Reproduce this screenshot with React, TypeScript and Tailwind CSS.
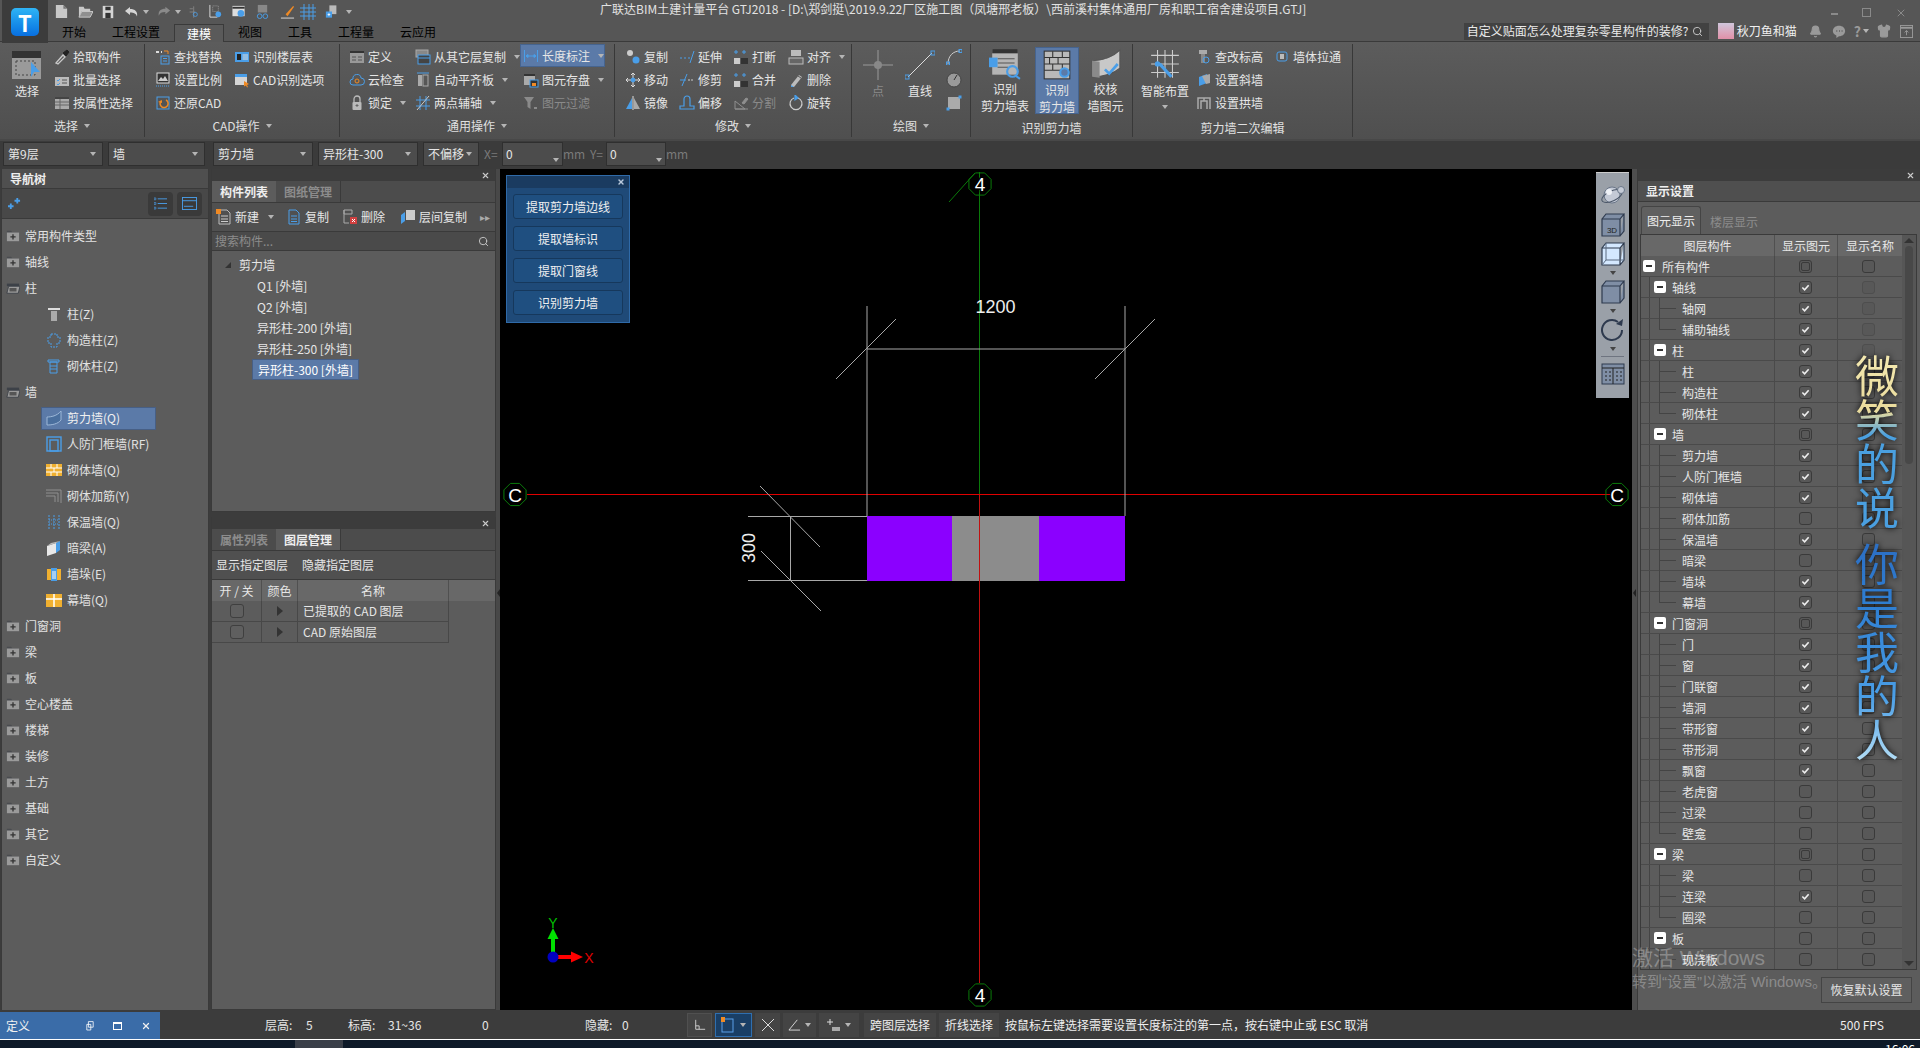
import type { ReactNode } from 'react';
import { Search, X, Bell, Shirt } from 'lucide-react';

const B = '#4a9ee8';
const G = '#c9c9c9';
const D = '#8f8f8f';
const O = '#f08a24';

const icons: Record<string, ReactNode> = {
  pick: <g fill="none" stroke={G}><path d="M2 14 9 6l2 2-7 7z" strokeWidth="1.3" /><path d="m9 4 4-3 2 2-3 4z" fill="#222" stroke="#222" /></g>,
  batch: <g><rect x="1" y="3" width="14" height="11" fill="#bbb" /><rect x="1" y="3" width="14" height="2" fill="#555" /><path d="m3 8 1 1 2-2m-3 5 1 1 2-2" stroke={B} fill="none" /><path d="M8 8h5M8 11h5" stroke="#555" /></g>,
  attr: <g><rect x="1" y="2" width="14" height="12" fill="#aaa" /><rect x="1" y="2" width="14" height="2" fill="#444" /><path d="M1 7h14M1 10h14M6 4v10" stroke="#666" /></g>,
  find: <g fill="none"><path d="M1 3h3M6 3h1" stroke="#ddd" strokeWidth="2" /><path d="M9 2h4v3" stroke={O} /><rect x="6" y="7" width="8" height="8" stroke={B} /><path d="M8 9.500h4M8 12h4" stroke={B} /></g>,
  scale: <g fill="none"><rect x="2" y="1" width="12" height="10" fill="#333" stroke="#ddd" /><path d="m3 9 3-4 2 2 2-3 3 5z" fill="#ccc" /><path d="M1 14h14" stroke={B} strokeDasharray="1 1" /></g>,
  restore: <g fill="none"><rect x="2" y="2" width="12" height="12" stroke={B} /><path d="M11 5a4 4 0 1 1-5 1" stroke={O} strokeWidth="1.500" /><path d="m3 7 4-2v3z" fill={O} /></g>,
  floor: <g><rect x="1" y="3" width="14" height="10" fill={B} /><rect x="3" y="5" width="4" height="6" fill="#222" /><path d="M8.500 6H14M8.500 8H14M8.500 10H14" stroke="#ddd" /></g>,
  cadopt: <g><rect x="1" y="2" width="12" height="11" fill="#d5d5d5" /><rect x="1" y="2" width="12" height="3" fill={B} /><path d="m10 9 5 3-2 1 1 2-1 .5-1-2-2 1z" fill={O} /></g>,
  def: <g><rect x="1" y="2" width="14" height="12" fill="#999" /><rect x="1" y="2" width="14" height="2" fill="#333" /><path d="M3 8h4M9 8h4M3 11h4M9 11h4" stroke="#555" /></g>,
  cloud: <g fill="none" stroke={B}><path d="M4 13a3 3 0 0 1 0-6 4 4 0 0 1 8-1 3.500 3.500 0 0 1 0 7z" /><circle cx="8" cy="9" r="2" stroke={O} /></g>,
  lock: <g><path d="M5 7V4a3 3 0 0 1 6 0v3" fill="none" stroke="#bbb" strokeWidth="1.300" /><rect x="3.500" y="7" width="9" height="8" rx="1" fill="#bbb" /><path d="M8 9v3M6.500 10.500h3" stroke="#666" /></g>,
  copylayer: <g fill="none"><rect x="1" y="1" width="12" height="7" fill="#888" stroke="#aaa" /><rect x="3" y="6" width="12" height="9" fill="#444" stroke={B} /><path d="M3 9h12" stroke={B} /></g>,
  flat: <g><path d="M2 1h12" stroke={B} /><rect x="3" y="3" width="4" height="11" fill="#aaa" /><rect x="8" y="3" width="5" height="11" fill="none" stroke="#aaa" /></g>,
  axis: <g fill="none" stroke={B}><path d="M1 5h14M1 11h14M5 1v14M11 1v14" /><path d="m2 15 12-14" stroke={G} /></g>,
  dim: <g fill="none" stroke={B}><path d="M1.500 2v12M14.500 2v12M3 8h10" /><path d="m3 8 2-1.500v3zm10 0-2-1.500v3z" fill={B} /></g>,
  save: <g><rect x="1" y="2" width="11" height="11" fill="#aaa" /><rect x="1" y="2" width="11" height="2" fill="#333" /><rect x="7" y="8" width="8" height="7" fill="#333" stroke={B} /><rect x="9" y="11" width="4" height="3" fill={O} /></g>,
  filter: <g><path d="M1 2h10L7.500 7v7l-3-2V7z" fill="#8a8a8a" /><path d="M11 13h3" stroke="#8a8a8a" strokeWidth="2" /></g>,
  copy: <g><circle cx="5" cy="4" r="3" fill="#ccc" /><circle cx="11" cy="11" r="3.500" fill={B} /></g>,
  move: <g fill="none" stroke="#ddd"><path d="M8 1v14M1 8h14M6 3l2-2 2 2M6 13l2 2 2-2M3 6 1 8l2 2M13 6l2 2-2 2" /><circle cx="8" cy="8" r="2" fill={B} stroke={B} /></g>,
  mirror: <g><path d="M7 3v11H1z" fill={B} /><path d="M9 3v11h6z" fill="#aaa" /><path d="M8 1v14" stroke="#ddd" /></g>,
  extend: <g fill="none"><path d="M1 9h2M5 9h2M9 9h2" stroke={B} /><path d="m11 14 4-12" stroke={B} /></g>,
  trim: <g fill="none"><path d="M9 8h2M12 8h2" stroke="#ccc" /><path d="M1 8h6M3 14 8 2" stroke={B} /></g>,
  offset: <g fill="none" stroke={B} strokeWidth="1.200"><path d="M1 14v-3h4V4a3 3 0 0 1 6 0v7h4v3z" /></g>,
  brk: <g><path d="M3 1v4M1 3h4M11 1v4M9 3h4" stroke={B} /><rect x="1" y="9" width="6" height="6" fill="#ccc" /><rect x="8" y="9" width="7" height="6" fill="#333" /></g>,
  split: <g fill="none" stroke={D}><path d="M2 14V6l10 8zM2 14h13" /><path d="m9 8 4-5 2 1-4 5z" fill={D} /></g>,
  alignobj: <g><rect x="3" y="1" width="10" height="6" fill="#bbb" /><rect x="1" y="9" width="14" height="6" fill="#666" stroke="#bbb" /></g>,
  del: <g><path d="m3 13 8-10 3 2-8 10H3z" fill="#bbb" /><path d="m3 13 3 2H3z" fill={B} /><path d="m10 4 3 2" stroke="#555" /></g>,
  rotate: <g fill="none" stroke="#ccc" strokeWidth="1.200"><path d="M6 3a6 6 0 1 0 4 0" /><path d="m7 0 3 3-3 2z" fill={B} stroke={B} /></g>,
  lift: <g><rect x="3" y="1" width="8" height="4" fill="#aaa" /><rect x="5" y="5" width="4" height="9" fill="#888" /><circle cx="10" cy="11" r="3" fill="none" stroke={B} /></g>,
  slope: <g><path d="m3 5 8-3v9l-8 3z" fill={B} /><path d="m6 4 8-2v9l-4 1" fill="#aaa" /></g>,
  arch: <g fill="none" stroke="#aaa" strokeWidth="1.500"><path d="M2 14V3h12v11M5 14V6h6v8" /><path d="M8 3v3" /></g>,
  pull: <g><rect x="3" y="3" width="10" height="9" rx="2" fill="none" stroke={B} /><rect x="6" y="5" width="4" height="5" fill="#bbb" /></g>,
  folderplus: <g><path d="M1 4V2h5l1 2h8v10H1z" fill="#3d4148" opacity=".6" /><rect x="1" y="4" width="14" height="10" fill="#9a9a9a" /><path d="M8 6v6M5 9h6" stroke="#333" strokeWidth="1.500" /></g>,
  folderopen: <g><path d="M1 3h14v3H1z" fill="#3d4148" /><path d="M3 6h13l-2 8H1z" fill="#9a9a9a" stroke="#3d4148" /><rect x="4" y="8" width="8" height="4" fill="#555" /></g>,
  col: <g><path d="M2 2h12v2H2z" fill="#ddd" /><path d="M5 5h6v10H5z" fill="#aaa" /></g>,
  gzz: <g fill="none" stroke={B}><path d="M5 2h6v3h3v6h-3v4H5v-4H2V5h3z" strokeDasharray="2 1" /></g>,
  qtz: <g fill="none" stroke={B}><path d="M2 2h11v2H2zM4 4h7v11H4zM4 8h7M4 11h7" /></g>,
  shear: <g fill={B}><path d="M1 7c4 0 10-1 14-6v9c-3 4-9 5-14 5z" fill="#4a6f9e" stroke="#9db8d8" /></g>,
  rf: <g fill="none" stroke={B} strokeWidth="1.400"><rect x="1" y="1" width="14" height="14" /><rect x="4" y="4" width="8" height="11" /></g>,
  brick: <g><rect x="0" y="2" width="16" height="12" fill="#f0b030" /><path d="M0 6h16M0 10h16M5 2v4M11 2v4M8 6v4M5 10v4M11 10v4" stroke="#fff" /></g>,
  rebar: <g fill="none" stroke={D}><path d="M0 2h15v13M0 5h12v9M0 8h9v6" /></g>,
  insul: <g fill="none" stroke={B}><path d="M3 1v14M8 1v14M13 1v14" strokeDasharray="2 1" /><path d="M3 6h10M3 10h10" strokeDasharray="1 1" /></g>,
  hidden: <g><path d="m1 6 9-3v10l-9 3z" fill="#e8e8e8" /><path d="m10 3 4-2v9l-4 3z" fill={B} /><path d="m1 6 9-3 4-2-9 2z" fill="#bbb" /></g>,
  pier: <g><rect x="1" y="3" width="14" height="11" fill="#f0b030" /><rect x="5" y="2" width="6" height="13" fill={B} /><path d="M7 5v8M9 5v8" stroke="#fff" /></g>,
  curtain: <g><rect x="0" y="2" width="16" height="13" fill="#f0b030" /><path d="M0 7h16M8 2v13" stroke="#fff" strokeWidth="1.500" /></g>,
  qnew: <g><path d="M2 1h8l4 4v10H2z" fill="#c8c8c8" /><path d="M10 1v4h4" fill="#777" /></g>,
  qopen: <g><path d="M1 3h5l1 2h6v3H4l-3 6z" fill="#c8c8c8" /><path d="M4 8h12l-3 6H1z" fill="#8f8f8f" stroke="#c8c8c8" /></g>,
  qsave: <g><rect x="2" y="1" width="12" height="14" fill="#d5d5d5" /><rect x="5" y="2" width="6" height="4" fill="#333" /><rect x="5" y="9" width="6" height="6" fill="#333" /></g>,
  qundo: <g><path d="M6 3 1 7l5 4V8.500c4 0 6 1 7 4 1-5-2-7.500-7-7.500z" fill="#d5d5d5" /></g>,
  qredo: <g><path d="m10 3 5 4-5 4V8.500c-4 0-6 1-7 4-1-5 2-7.500 7-7.500z" fill="#8a8a8a" /></g>,
  qgrid: <g fill="none"><path d="M2 4h4M2 8h7M7 1v14" stroke="#8a8a8a" /><circle cx="9" cy="11" r="2.500" stroke={B} /></g>,
  qcorner: <g><path d="M2 1v13h8" fill="none" stroke="#ddd" /><path d="M5 2h6v6H5z" fill="none" stroke="#999" strokeDasharray="1 1" /><circle cx="11" cy="11" r="3" fill={B} /></g>,
  qdoc: <g><rect x="1" y="2" width="13" height="11" fill="#ddd" /><path d="M1 4h13" stroke="#333" strokeWidth="2" /><circle cx="10" cy="10" r="3.500" fill={B} /></g>,
  qbook: <g fill="none"><rect x="3" y="1" width="10" height="8" fill="#888" /><circle cx="5" cy="13" r="2.500" stroke={B} /><circle cx="11" cy="13" r="2.500" stroke={B} /></g>,
  qbrush: <g><path d="m6 11 8-9 1 1-7 10z" fill={O} /><path d="M1 15h14" stroke="#ddd" /></g>,
  qfence: <g fill="none" stroke={B}><path d="M0 4h16M0 8h16M0 12h16M4 0v16M9 0v16M13 0v16" /></g>,
  qplus: <g><path d="M5 1h8v10H5z" fill="#bbb" /><rect x="1" y="8" width="7" height="7" fill={B} /><path d="M4.500 10v3M3 11.500h3" stroke="#fff" /></g>,
};

function Ic({ n, className = 'w-4 h-4' }: { n: string; className?: string }) {
  return (
    <svg viewBox="0 0 16 16" className={`${className} shrink-0`}>
      {icons[n]}
    </svg>
  );
}

function Caret({ className = '' }: { className?: string }) {
  return <span className={`inline-block w-0 h-0 border-x-[3px] border-x-transparent border-t-[4px] border-t-[#b5b5b5] ${className}`} />;
}

function Tool({ icon, label, arrow, off, active }: { icon: string; label: string; arrow?: boolean; off?: boolean; active?: boolean }) {
  return (
    <div className={`h-[23px] flex items-center gap-[2px] whitespace-nowrap ${off ? 'text-[#8a8a8a]' : 'text-[#e6e6e6]'} ${active ? 'bg-[#5b7aa8] border border-[#46648f] -ml-[3px] pl-[2px] -mt-[1px] mb-[1px] w-[85px]' : ''}`}>
      <Ic n={icon} />
      <span className="ml-[1px]">{label}</span>
      {arrow && <Caret className="ml-[6px]" />}
    </div>
  );
}

function ToolCol({ w, items }: { w: string; items: ReactNode }) {
  return <div className={`${w} shrink-0 flex flex-col -mt-[1px]`}>{items}</div>;
}

function Group({ w, title, arrow = true, children }: { w: string; title: string; arrow?: boolean; children: ReactNode }) {
  return (
    <div className={`${w} shrink-0 h-full flex flex-col border-r border-[#383838]`}>
      <div className="h-[73px] pt-[2px] flex">{children}</div>
      <div className={`flex-1 flex items-center justify-center gap-[6px] text-[#e0e0e0] ${arrow ? 'pb-[2px]' : 'pt-[2px]'}`}>
        <span>{title}</span>
        {arrow && <Caret />}
      </div>
    </div>
  );
}

function Big({ label, w, children, off, active, sub, caret }: { label: string; w: string; children: ReactNode; off?: boolean; active?: boolean; sub?: string; caret?: boolean }) {
  const boxH = active ? 'h-[36px]' : sub ? 'h-[37px]' : 'h-[34px]';
  return (
    <div className={`${w} shrink-0 flex flex-col items-center h-[67px] mt-[1px] ${active ? 'bg-[#5b7aa8] border border-[#46648f]' : ''} ${off ? 'text-[#8a8a8a]' : 'text-[#e6e6e6]'}`}>
      <div className={`${boxH} mt-[1px] flex items-center justify-center`}>{children}</div>
      <div className="leading-[17px]">{label}</div>
      {sub && <div className="leading-[17px] whitespace-nowrap">{sub}</div>}
      {caret && <Caret className="mt-[6px]" />}
    </div>
  );
}

function Drop({ w, text, className = '' }: { w: string; text: string; className?: string }) {
  return (
    <div className={`${w} h-[24px] bg-[#4c4c4c] border border-[#2f2f2f] flex items-center justify-between px-[4px] text-[#e6e6e6] shrink-0 ${className}`}>
      <span>{text}</span>
      <Caret className="mr-[2px]" />
    </div>
  );
}

function Ribbon() {
  return (
    <div className="h-[98px] flex bg-linear-to-b from-[#5c5c5c] to-[#4f4f4f] border-t border-[#3a3a3a] pt-[2px] pb-[2px]">
      <Group w="w-[145px]" title="选择">
        <Big w="w-[54px]" label="选择">
          <svg viewBox="0 0 30 30" className="w-[30px] h-[30px]">
            <rect x="0" y="1" width="29" height="28" fill="#9a9a9a" />
            <rect x="0" y="1" width="29" height="7" fill="#333" />
            <rect x="4" y="11" width="19" height="14" fill="none" stroke="#444" strokeDasharray="2 2" />
            <path d="m19 12 9 10h-6l-3 5z" fill={B} />
          </svg>
        </Big>
        <ToolCol w="w-[90px]" items={<><Tool icon="pick" label="拾取构件" /><Tool icon="batch" label="批量选择" /><Tool icon="attr" label="按属性选择" /></>} />
      </Group>
      <Group w="w-[195px]" title="CAD操作">
        <div className="w-[10px]" />
        <ToolCol w="w-[79px]" items={<><Tool icon="find" label="查找替换" /><Tool icon="scale" label="设置比例" /><Tool icon="restore" label="还原CAD" /></>} />
        <ToolCol w="w-[100px]" items={<><Tool icon="floor" label="识别楼层表" /><Tool icon="cadopt" label="CAD识别选项" /></>} />
      </Group>
      <Group w="w-[275px]" title="通用操作">
        <div className="w-[9px]" />
        <ToolCol w="w-[66px]" items={<><Tool icon="def" label="定义" /><Tool icon="cloud" label="云检查" /><Tool icon="lock" label="锁定" arrow /></>} />
        <ToolCol w="w-[108px]" items={<><Tool icon="copylayer" label="从其它层复制" arrow /><Tool icon="flat" label="自动平齐板" arrow /><Tool icon="axis" label="两点辅轴" arrow /></>} />
        <ToolCol w="w-[90px]" items={<><Tool icon="dim" label="长度标注" arrow active /><Tool icon="save" label="图元存盘" arrow /><Tool icon="filter" label="图元过滤" off /></>} />
      </Group>
      <Group w="w-[237px]" title="修改">
        <div className="w-[10px]" />
        <ToolCol w="w-[54px]" items={<><Tool icon="copy" label="复制" /><Tool icon="move" label="移动" /><Tool icon="mirror" label="镜像" /></>} />
        <ToolCol w="w-[54px]" items={<><Tool icon="extend" label="延伸" /><Tool icon="trim" label="修剪" /><Tool icon="offset" label="偏移" /></>} />
        <ToolCol w="w-[55px]" items={<><Tool icon="brk" label="打断" /><Tool icon="brk" label="合并" /><Tool icon="split" label="分割" off /></>} />
        <ToolCol w="w-[60px]" items={<><Tool icon="alignobj" label="对齐" arrow /><Tool icon="del" label="删除" /><Tool icon="rotate" label="旋转" /></>} />
      </Group>
      <Group w="w-[119px]" title="绘图">
        <div className="w-[7px]" />
        <Big w="w-[38px]" label="点" off>
          <svg viewBox="0 0 30 30" className="w-[30px] h-[30px]"><path d="M15 0v30M0 15h30" stroke="#9a9a9a" /><circle cx="15" cy="15" r="4" fill="#888" /></svg>
        </Big>
        <Big w="w-[46px]" label="直线">
          <svg viewBox="0 0 30 30" className="w-[30px] h-[30px]"><path d="M3 27 27 3" stroke="#ddd" /><rect x="0" y="25" width="4" height="4" fill="none" stroke={B} /><rect x="26" y="1" width="4" height="4" fill="none" stroke={B} /></svg>
        </Big>
        <div className="w-[22px] flex flex-col items-center gap-[7px] pt-[3px]">
          <svg viewBox="0 0 16 16" className="w-4 h-4"><path d="M2 15C2 7 7 2 14 2" fill="none" stroke="#ccc" /><rect x="0.500" y="13" width="3" height="3" fill="none" stroke={B} /><rect x="13" y="0.500" width="3" height="3" fill="none" stroke={B} /></svg>
          <svg viewBox="0 0 16 16" className="w-4 h-4"><circle cx="8" cy="8" r="7" fill="#9a9a9a" stroke="#444" /><path d="m8 8 3-5" stroke="#333" /></svg>
          <svg viewBox="0 0 16 16" className="w-4 h-4"><rect x="2" y="2" width="12" height="12" fill="#aaa" /><rect x="0.500" y="12.500" width="3" height="3" fill={B} /><rect x="12.500" y="0.500" width="3" height="3" fill={B} /></svg>
        </div>
      </Group>
      <Group w="w-[162px]" title="识别剪力墙" arrow={false}>
        <div className="w-[5px]" />
        <Big w="w-[60px]" label="识别" sub="剪力墙表">
          <svg viewBox="0 0 30 30" className="w-[32px] h-[32px]"><rect x="3" y="1" width="24" height="24" fill="#b5b5b5" /><rect x="3" y="1" width="24" height="4" fill="#333" /><path d="M8 10h16M8 14h16M8 18h10" stroke="#555" /><rect x="0" y="9" width="8" height="9" fill={B} /><circle cx="22" cy="22" r="5" fill="none" stroke={B} strokeWidth="2" /><path d="m25 26 4 3" stroke={B} strokeWidth="2" /></svg>
        </Big>
        <Big w="w-[44px]" label="识别" sub="剪力墙" active>
          <svg viewBox="0 0 30 30" className="w-[32px] h-[32px]"><rect x="3" y="2" width="24" height="26" fill="#b9b9b9" stroke="#333" /><path d="M3 8h24M3 14h24M3 20h24M11 2v6M20 2v6M8 8v6M16 8v6M11 14v6M20 14v6" stroke="#333" /><circle cx="22" cy="22" r="4" fill="#5b7aa8" stroke={B} strokeWidth="2" /></svg>
        </Big>
        <Big w="w-[53px]" label="校核" sub="墙图元">
          <svg viewBox="0 0 30 30" className="w-[32px] h-[32px]"><path d="M2 12c10 0 20-4 26-10v17c-6 5-16 8-26 8z" fill="#c8c8c8" stroke="#555" /><path d="M2 12v15l7 1V13z" fill="#8a8a8a" /><path d="m14 20 4 4 8-9" fill="none" stroke={B} strokeWidth="2.500" /></svg>
        </Big>
      </Group>
      <Group w="w-[220px]" title="剪力墙二次编辑" arrow={false}>
        <div className="w-[3px]" />
        <Big w="w-[58px]" label="智能布置" caret>
          <svg viewBox="0 0 30 30" className="w-[32px] h-[32px]"><path d="M2 6h26M2 14h26M2 22h26M8 1v26M15 1v26M22 1v26" stroke="#ccc" /><circle cx="8" cy="14" r="2.500" fill={B} /><path d="m10 14 11 12" stroke={B} strokeWidth="3" /></svg>
        </Big>
        <div className="w-[2px]" />
        <ToolCol w="w-[78px]" items={<><Tool icon="lift" label="查改标高" /><Tool icon="slope" label="设置斜墙" /><Tool icon="arch" label="设置拱墙" /></>} />
        <ToolCol w="w-[72px]" items={<Tool icon="pull" label="墙体拉通" />} />
      </Group>
    </div>
  );
}

const TitleText = '广联达BIM土建计量平台 GTJ2018 - [D:\\郑剑挺\\2019.9.22厂区施工图（凤塘邢老板）\\西前溪村集体通用厂房和职工宿舍建设项目.GTJ]';

function Header() {
  return (
    <div className="h-[41px] flex bg-[#565656]">
      <div className="w-[46px] h-[43px] ml-[2px] bg-[#3c3c3c] flex items-center justify-center relative z-10">
        <div className="w-[28px] h-[28px] rounded-[5px] bg-linear-to-b from-[#2fb4f5] to-[#0a6fe0] flex items-center justify-center text-white font-bold text-[22px] leading-none">T</div>
      </div>
      <div className="flex-1 flex flex-col min-w-0">
        <div className="h-[23px] flex items-center relative">
          <div className="flex items-center pl-[6px]">
            <Ic n="qnew" className="w-[15px] h-[15px] mr-[9px]" />
            <Ic n="qopen" className="w-[15px] h-[15px] mr-[8px]" />
            <Ic n="qsave" className="w-[14px] h-[14px] mr-[9px]" />
            <Ic n="qundo" className="w-[16px] h-[16px] mr-[3px]" />
            <Caret className="mr-[7px]" />
            <Ic n="qredo" className="w-[15px] h-[15px] mr-[4px]" />
            <Caret className="mr-[7px]" />
            <Ic n="qgrid" className="w-[13px] h-[14px] mr-[7px]" />
            <Ic n="qcorner" className="w-[15px] h-[15px] mr-[8px]" />
            <Ic n="qdoc" className="w-[16px] h-[15px] mr-[8px]" />
            <Ic n="qbook" className="w-[15px] h-[15px] mr-[10px]" />
            <Ic n="qbrush" className="w-[15px] h-[15px] mr-[5px]" />
            <Ic n="qfence" className="w-[16px] h-[16px] mr-[9px]" />
            <Ic n="qplus" className="w-[14px] h-[15px] mr-[7px]" />
            <Caret />
          </div>
          <div className="absolute left-[552px] top-[3px] text-[#e2e2e2] whitespace-nowrap">{TitleText}</div>
          <div className="ml-auto flex items-center gap-[24px] pr-[13px] text-[#8a8a8a] mt-[2px]">
            <span className="w-[7px] h-[2px] bg-[#8a8a8a] mt-[3px]" />
            <span className="w-[9px] h-[9px] border border-[#8a8a8a]" />
            <X className="w-[12px] h-[12px]" />
          </div>
        </div>
        <div className="h-[18px] flex items-end relative">
          <div className="flex items-center gap-[26px] pl-[14px] h-full">
            <span>开始</span>
            <span>工程设置</span>
            <span className="-mx-[12px] px-[12px] h-[18px] bg-[#5a5a5a] border-x border-t border-[#3a3a3a] flex items-center relative top-[1px] text-white">建模</span>
            <span>视图</span>
            <span>工具</span>
            <span>工程量</span>
            <span>云应用</span>
          </div>
          <div className="ml-auto flex items-center h-[18px] mb-[1px] pr-[7px] text-[#9a9a9a]">
            <div className="w-[245px] h-[17px] bg-[#424242] flex items-center justify-between px-[3px] text-[#eaeaea] mr-[9px]">
              <span>自定义贴面怎么处理复杂零星构件的装修?</span>
              <Search className="w-[11px] h-[11px] text-[#ccc] mr-[3px]" />
            </div>
            <div className="w-[16px] h-[16px] bg-linear-to-b from-[#cfc6dc] to-[#e090a8] mr-[3px]" />
            <span className="text-[#f0f0f0] w-[72px]">秋刀鱼和猫</span>
            <Bell className="w-[13px] h-[13px] fill-[#9a9a9a] mr-[10px]" />
            <svg viewBox="0 0 16 16" className="w-[14px] h-[14px] mr-[8px]"><path d="M8 2c4 0 7 2.500 7 6s-3 6-7 6l-3 2v-3C2 12 1 10 1 8c0-3.500 3-6 7-6z" fill="#9a9a9a" /><path d="M5 8h1M8 8h1M11 8h1" stroke="#565656" strokeWidth="1.500" /></svg>
            <span className="font-bold text-[14px] leading-none">?</span>
            <Caret className="mr-[8px] ml-[2px]" />
            <Shirt className="w-[14px] h-[14px] fill-[#9a9a9a] mr-[9px]" />
            <svg viewBox="0 0 14 14" className="w-[13px] h-[13px]"><rect x="0.500" y="0.500" width="13" height="13" fill="none" stroke="#9a9a9a" /><path d="M1 3h12" stroke="#9a9a9a" strokeWidth="2" /><path d="M7 11V6M5 8l2-2 2 2" fill="none" stroke="#9a9a9a" /></svg>
          </div>
        </div>
      </div>
    </div>
  );
}

function OptionBar() {
  return (
    <div className="h-[30px] bg-[#3b3b3b] border-t-2 border-[#484848] flex items-center pl-[3px] gap-[5px] shrink-0 pb-[2px]">
      <Drop w="w-[100px]" text="第9层" />
      <Drop w="w-[97px]" text="墙" />
      <Drop w="w-[100px]" text="剪力墙" className="ml-[3px]" />
      <Drop w="w-[100px]" text="异形柱-300" />
      <Drop w="w-[56px]" text="不偏移" />
      <span className="text-[#7a7a7a] w-[18px]">X=</span>
      <div className="w-[61px] h-[24px] bg-[#4c4c4c] border border-[#2f2f2f] flex items-center justify-between px-[3px] -ml-[5px] text-[#e6e6e6]">
        <span>0</span>
        <Caret className="mt-[12px]" />
      </div>
      <span className="text-[#7a7a7a] -ml-[5px] w-[22px]">mm</span>
      <span className="text-[#7a7a7a] w-[16px]">Y=</span>
      <div className="w-[60px] h-[24px] bg-[#4c4c4c] border border-[#2f2f2f] flex items-center justify-between px-[3px] -ml-[5px] text-[#e6e6e6]">
        <span>0</span>
        <Caret className="mt-[12px]" />
      </div>
      <span className="text-[#7a7a7a] -ml-[5px]">mm</span>
    </div>
  );
}

const navItems: { t: string; n: string; child?: boolean; sel?: boolean }[] = [
  { t: '常用构件类型', n: 'folderplus' },
  { t: '轴线', n: 'folderplus' },
  { t: '柱', n: 'folderopen' },
  { t: '柱(Z)', n: 'col', child: true },
  { t: '构造柱(Z)', n: 'gzz', child: true },
  { t: '砌体柱(Z)', n: 'qtz', child: true },
  { t: '墙', n: 'folderopen' },
  { t: '剪力墙(Q)', n: 'shear', child: true, sel: true },
  { t: '人防门框墙(RF)', n: 'rf', child: true },
  { t: '砌体墙(Q)', n: 'brick', child: true },
  { t: '砌体加筋(Y)', n: 'rebar', child: true },
  { t: '保温墙(Q)', n: 'insul', child: true },
  { t: '暗梁(A)', n: 'hidden', child: true },
  { t: '墙垛(E)', n: 'pier', child: true },
  { t: '幕墙(Q)', n: 'curtain', child: true },
  { t: '门窗洞', n: 'folderplus' },
  { t: '梁', n: 'folderplus' },
  { t: '板', n: 'folderplus' },
  { t: '空心楼盖', n: 'folderplus' },
  { t: '楼梯', n: 'folderplus' },
  { t: '装修', n: 'folderplus' },
  { t: '土方', n: 'folderplus' },
  { t: '基础', n: 'folderplus' },
  { t: '其它', n: 'folderplus' },
  { t: '自定义', n: 'folderplus' },
];

function NavPanel() {
  return (
    <div className="w-[208px] ml-[1px] shrink-0 bg-[#5c5c5c] flex flex-col border-x border-[#3a3a3a]">
      <div className="h-[20px] bg-[#4f4f4f] font-bold flex items-center pl-[8px] text-[#eee] border-b border-[#3a3a3a]">导航树</div>
      <div className="h-[30px] bg-[#484848] border-b border-[#3a3a3a] flex items-center px-[6px]">
        <svg viewBox="0 0 14 14" className="w-[13px] h-[13px]"><path d="M3 7v6M0 10h6M10 1v6M7 4h6" stroke={B} strokeWidth="2" /></svg>
        <div className="ml-auto w-[25px] h-[24px] rounded-[4px] bg-[#3a3a3a] flex items-center justify-center">
          <svg viewBox="0 0 14 14" className="w-[13px] h-[13px]"><path d="M4 2h10M4 7h10M4 12h10" stroke={B} /><path d="M0 1h2v2H0zM0 6h2v2H0zM0 11h2v2H0z" fill="none" stroke={B} strokeWidth=".7" /></svg>
        </div>
        <div className="ml-[4px] w-[25px] h-[24px] rounded-[4px] bg-[#3a3a3a] flex items-center justify-center">
          <svg viewBox="0 0 16 14" className="w-[15px] h-[13px]"><rect x="0.500" y="0.500" width="15" height="13" fill="none" stroke={B} /><path d="M0 4h16M2 10h10" stroke={B} /></svg>
        </div>
      </div>
      <div className="pt-[4px] flex flex-col">
        {navItems.map((it) => (
          <div key={it.t} className={`h-[26px] flex items-center text-[#e2e2e2] ${it.child ? 'pl-[39px]' : 'pl-[4px]'}`}>
            {it.sel ? (
              <div className="h-[23px] w-[115px] bg-[#5b7aa8] border border-[#475f85] flex items-center gap-[5px] pl-[4px] text-[#f0f0f0]">
                <Ic n={it.n} />
                {it.t}
              </div>
            ) : (
              <div className={`flex items-center gap-[5px] ${it.child ? 'pl-[5px]' : ''}`}>
                <Ic n={it.n} className={it.child ? 'w-4 h-4' : 'w-[14px] h-[14px]'} />
                {it.t}
              </div>
            )}
          </div>
        ))}
      </div>
    </div>
  );
}

function PanelStrip() {
  return (
    <div className="h-[12px] bg-[#3c3c3c] flex items-center justify-end pr-[5px] text-[#ccc] shrink-0">
      <X className="w-[9px] h-[9px]" strokeWidth={3} />
    </div>
  );
}

function TabPair({ a, b, first }: { a: string; b: string; first: boolean }) {
  return (
    <div className="h-[22px] bg-[#4c4c4c] flex border-b border-[#3a3a3a] shrink-0 font-bold">
      <div className={`w-[64px] flex items-center justify-center ${first ? 'bg-[#5c5c5c] text-[#eee]' : 'text-[#8c8c8c]'}`}>{a}</div>
      <div className={`w-[65px] flex items-center justify-center border-r border-[#3a3a3a] ${first ? 'text-[#8c8c8c]' : 'bg-[#5c5c5c] text-[#eee]'}`}>{b}</div>
    </div>
  );
}

const listItems = ['Q1 [外墙]', 'Q2 [外墙]', '异形柱-200 [外墙]', '异形柱-250 [外墙]', '异形柱-300 [外墙]'];

function ListPanel() {
  return (
    <div className="flex-1 flex flex-col">
      <div className="h-[343px] flex flex-col border border-[#3a3a3a] border-t-0 bg-[#5c5c5c] shrink-0">
        <PanelStrip />
        <TabPair a="构件列表" b="图纸管理" first />
        <div className="h-[29px] bg-[#505050] border-b border-[#3a3a3a] flex items-center pl-[4px] text-[#e6e6e6] shrink-0">
          <svg viewBox="0 0 16 16" className="w-4 h-4"><path d="M3 1h8l3 3v11H3z" fill="none" stroke="#bbb" /><path d="M5 7h7M5 10h7M5 12.500h7" stroke="#ccc" /><rect x="0" y="0" width="5" height="5" fill={O} /></svg>
          <span className="ml-[3px]">新建</span>
          <Caret className="ml-[9px]" />
          <svg viewBox="0 0 16 16" className="w-4 h-4 ml-[12px]"><path d="M3 1h7l3 3v11H3z" fill="none" stroke={B} /><path d="M5 7h6M5 10h6M5 12.500h6" stroke={B} /></svg>
          <span className="ml-[3px]">复制</span>
          <svg viewBox="0 0 16 16" className="w-4 h-4 ml-[13px]"><path d="M2 1h8v4H2zM2 1v13h5" fill="none" stroke="#aaa" /><rect x="8" y="8" width="7" height="7" fill="#d04040" /><path d="m10 10 3 3m0-3-3 3" stroke="#fff" /></svg>
          <span className="ml-[3px]">删除</span>
          <svg viewBox="0 0 16 16" className="w-4 h-4 ml-[15px]"><path d="M1 15V6l4-3v9z" fill={B} /><rect x="6" y="1" width="9" height="10" fill="#ccc" /></svg>
          <span className="ml-[3px]">层间复制</span>
          <span className="ml-auto mr-[5px] text-[#aaa] text-[10px]">▸▸</span>
        </div>
        <div className="h-[19px] bg-[#4a4a4a] border-b border-[#3a3a3a] flex items-center justify-between pl-[3px] pr-[6px] text-[#8c8c8c] shrink-0">
          <span>搜索构件...</span>
          <Search className="w-[11px] h-[11px] text-[#ccc]" />
        </div>
        <div className="flex-1 pt-[3px] text-[#e6e6e6]">
          <div className="h-[21px] flex items-center pl-[13px] gap-[8px]">
            <span className="w-0 h-0 border-l-[6px] border-l-transparent border-b-[6px] border-b-[#333]" />
            剪力墙
          </div>
          {listItems.map((t, i) => (
            <div key={t} className="h-[21px] flex items-center pl-[40px]">
              <span className={`h-[21px] flex items-center px-[5px] ${i === 4 ? 'bg-[#5b7aa8] border border-[#475f85] text-white' : ''}`}>{t}</span>
            </div>
          ))}
        </div>
      </div>
      <div className="h-[5px]" />
      <div className="flex-1 flex flex-col border border-[#3a3a3a] bg-[#5c5c5c] border-t-0">
        <PanelStrip />
        <TabPair a="属性列表" b="图层管理" first={false} />
        <div className="h-[29px] bg-[#505050] border-b border-[#3a3a3a] flex items-center gap-[14px] pl-[4px] text-[#e6e6e6] shrink-0">
          <span>显示指定图层</span>
          <span>隐藏指定图层</span>
        </div>
        <div className="grid grid-cols-[50px_36px_151px_1fr] h-[21px] bg-[#686868] text-[#e6e6e6] shrink-0">
          <div className="flex items-center justify-center border-r border-[#505050]">开 / 关</div>
          <div className="flex items-center justify-center border-r border-[#505050]">颜色</div>
          <div className="flex items-center justify-center border-r border-[#505050]">名称</div>
          <div />
        </div>
        {['已提取的 CAD 图层', 'CAD 原始图层'].map((t) => (
          <div key={t} className="grid grid-cols-[50px_36px_151px] w-[237px] h-[21px] border-b border-[#484848] text-[#e6e6e6] shrink-0">
            <div className="flex items-center justify-center border-r border-[#484848]">
              <span className="w-[14px] h-[14px] rounded-[3px] border border-[#3f3f3f] bg-[#5f5f5f]" />
            </div>
            <div className="flex items-center justify-center border-r border-[#484848]">
              <span className="w-0 h-0 border-y-[5px] border-y-transparent border-l-[6px] border-l-[#333]" />
            </div>
            <div className="flex items-center pl-[5px] border-r border-[#484848]">{t}</div>
          </div>
        ))}
      </div>
    </div>
  );
}

function Bubble({ x, y, t }: { x: number; y: number; t: string }) {
  const pts = Array.from({ length: 8 }, (_, i) => {
    const a = Math.PI / 8 + (i * Math.PI) / 4;
    return `${x + 12 * Math.cos(a)},${y + 12 * Math.sin(a)}`;
  }).join(' ');
  return (
    <g>
      <polygon points={pts} fill="none" stroke="#0a7a0a" />
      <text x={x} y={y + 7} textAnchor="middle" fill="#fff" fontSize="19" fontFamily="Liberation Sans" stroke="#000" strokeWidth="3" paintOrder="stroke">{t}</text>
    </g>
  );
}

function Drawing() {
  const g = '#a8a8a8';
  return (
    <svg viewBox="500 169 1132 841" className="absolute inset-0 w-[1132px] h-[841px]">
      <path d="M979.500 172V494" stroke="#0a7a0a" />
      <path d="M979.500 494V983" stroke="#c01010" />
      <path d="M527 494.500H1612" stroke="#e00000" />
      <path d="m949 202 26-29" stroke="#0a7a0a" />
      <path d="M867 306V516M1125 306V516M867 349H1125M748 516.500H867M748 580.500H867M790.500 516V580" stroke={g} />
      <path d="m836 379 60-60M1095 379l60-60" stroke={g} />
      <path d="m760 486 60 61M761 551l60 60" stroke={g} />
      <rect x="867" y="516" width="85" height="65" fill="#8b00ff" />
      <rect x="952" y="516" width="87" height="65" fill="#8c8c8c" />
      <rect x="1039" y="516" width="86" height="65" fill="#8b00ff" />
      <path d="M979.500 516V581" stroke="#c01010" />
      <text x="995.500" y="313" textAnchor="middle" fill="#eee" fontSize="18" fontFamily="Liberation Sans">1200</text>
      <text x="0" y="0" transform="translate(755 548) rotate(-90)" textAnchor="middle" fill="#eee" fontSize="18" fontFamily="Liberation Sans">300</text>
      <Bubble x={980} y={184} t="4" />
      <Bubble x={980} y={995} t="4" />
      <Bubble x={515} y={494.500} t="C" />
      <Bubble x={1617} y={494.500} t="C" />
      <path d="M553 957v-20" stroke="#00e000" strokeWidth="4" />
      <path d="m553 928 5.500 11h-11z" fill="#00e000" />
      <path d="M553 957h18" stroke="#ff0000" strokeWidth="4" />
      <path d="m583 957-12-5.500v11z" fill="#ff0000" />
      <circle cx="553" cy="957" r="5.500" fill="#0000c0" />
      <text x="553" y="928" textAnchor="middle" fill="#00c000" fontSize="14" fontFamily="Liberation Sans">Y</text>
      <text x="589" y="963" textAnchor="middle" fill="#e00000" fontSize="14" fontFamily="Liberation Sans">X</text>
    </svg>
  );
}

function ViewTool() {
  return (
    <div className="absolute left-[1096px] top-[3px] w-[33px] h-[226px] bg-[#9aa0a8] border-t border-[#ccc] flex flex-col items-center pt-[11px]">
      <svg viewBox="0 0 24 22" className="w-[24px] h-[22px] shrink-0"><circle cx="11" cy="11" r="8" fill="#c4cad6" stroke="#6a7688" /><ellipse cx="11" cy="12" rx="11" ry="5" fill="none" stroke="#4a5668" transform="rotate(-25 11 12)" /><circle cx="8" cy="8" r="3" fill="#eef1f6" /><circle cx="20" cy="6" r="3.500" fill="#c5cbd6" stroke="#6a7688" /></svg>
      <svg viewBox="0 0 24 24" className="w-[24px] h-[24px] mt-[7px] shrink-0"><path d="M1 6h18v17H1zM1 6l4-5h18l-4 5M19 23l4-5V1" fill="#7f8ea5" stroke="#2e3a4e" strokeWidth="1.200" /><text x="11" y="20" fontSize="8" fill="#222" fontFamily="Liberation Sans" textAnchor="middle">3D</text></svg>
      <svg viewBox="0 0 24 24" className="w-[24px] h-[24px] mt-[5px] shrink-0"><path d="M1 6h18v17H1zM1 6l4-5h18l-4 5M19 23l4-5V1" fill="#d4e8ff" stroke="#2e3a4e" strokeWidth="1.200" /><path d="M5 1v17h18M5 18l-4 5" fill="none" stroke="#5a6a80" /></svg>
      <Caret className="mt-[5px] !border-t-[#444]" />
      <svg viewBox="0 0 24 24" className="w-[24px] h-[24px] mt-[5px] shrink-0"><path d="M1 6h18v17H1zM1 6l4-5h18l-4 5M19 23l4-5V1" fill="#7f8ea5" stroke="#2e3a4e" strokeWidth="1.200" /></svg>
      <Caret className="mt-[5px] !border-t-[#444]" />
      <svg viewBox="0 0 24 24" className="w-[24px] h-[24px] mt-[5px] shrink-0"><path d="M21 12a10 10 0 1 1-4-8" fill="none" stroke="#2e3a4e" strokeWidth="2" /><path d="m22 1-1 7-6-2z" fill="#2e3a4e" /></svg>
      <Caret className="mt-[5px] !border-t-[#444]" />
      <div className="w-[23px] h-px bg-[#6e7480] mt-[5px] shrink-0" />
      <svg viewBox="0 0 24 24" className="w-[24px] h-[24px] mt-[4px] shrink-0"><rect x="1" y="3" width="22" height="20" fill="#7f8ea5" stroke="#2e3a4e" /><path d="M1 7h22M12 7v16M4 11h2M8 11h2M4 15h2M8 15h2M4 19h2M8 19h2M15 11h2M19 11h2M15 15h2M19 15h2M15 19h2M19 19h2" stroke="#222" /></svg>
    </div>
  );
}

function Canvas() {
  return (
    <div className="relative w-[1132px] shrink-0 bg-black overflow-hidden">
      <Drawing />
      <div className="absolute left-[6px] top-[6px] w-[124px] h-[148px] bg-[#1f4a78] border border-[#2f6aa8] flex flex-col">
        <div className="h-[12px] bg-[#1a3b60] flex items-center justify-end pr-[4px] text-[#b9c9dc] shrink-0">
          <X className="w-[8px] h-[8px]" strokeWidth={4} />
        </div>
        <div className="flex flex-col gap-[7px] px-[6px] pt-[6px]">
          {['提取剪力墙边线', '提取墙标识', '提取门窗线', '识别剪力墙'].map((t) => (
            <div key={t} className="h-[25px] bg-[#1f4f80] border border-[#16385c] rounded-[3px] flex items-center justify-center text-[#f0f0f0]">{t}</div>
          ))}
        </div>
      </div>
      <ViewTool />
    </div>
  );
}

type Row = { t: string; l: 0 | 1 | 2; s: 0 | 1 | 2; last?: boolean };

const rows: Row[] = [
  { t: '所有构件', l: 0, s: 2 },
  { t: '轴线', l: 1, s: 1 },
  { t: '轴网', l: 2, s: 1 },
  { t: '辅助轴线', l: 2, s: 1, last: true },
  { t: '柱', l: 1, s: 1 },
  { t: '柱', l: 2, s: 1 },
  { t: '构造柱', l: 2, s: 1 },
  { t: '砌体柱', l: 2, s: 1, last: true },
  { t: '墙', l: 1, s: 2 },
  { t: '剪力墙', l: 2, s: 1 },
  { t: '人防门框墙', l: 2, s: 1 },
  { t: '砌体墙', l: 2, s: 1 },
  { t: '砌体加筋', l: 2, s: 0 },
  { t: '保温墙', l: 2, s: 1 },
  { t: '暗梁', l: 2, s: 0 },
  { t: '墙垛', l: 2, s: 1 },
  { t: '幕墙', l: 2, s: 1, last: true },
  { t: '门窗洞', l: 1, s: 2 },
  { t: '门', l: 2, s: 1 },
  { t: '窗', l: 2, s: 1 },
  { t: '门联窗', l: 2, s: 1 },
  { t: '墙洞', l: 2, s: 1 },
  { t: '带形窗', l: 2, s: 1 },
  { t: '带形洞', l: 2, s: 1 },
  { t: '飘窗', l: 2, s: 1 },
  { t: '老虎窗', l: 2, s: 0 },
  { t: '过梁', l: 2, s: 0 },
  { t: '壁龛', l: 2, s: 0, last: true },
  { t: '梁', l: 1, s: 2 },
  { t: '梁', l: 2, s: 0 },
  { t: '连梁', l: 2, s: 1 },
  { t: '圈梁', l: 2, s: 0, last: true },
  { t: '板', l: 1, s: 0 },
  { t: '现浇板', l: 2, s: 0 },
];

function Check({ s, dim }: { s: 0 | 1 | 2; dim?: boolean }) {
  return (
    <span className={`w-[13px] h-[13px] rounded-[3px] border flex items-center justify-center bg-[#585858] ${dim ? 'border-[#4e4e4e]' : 'border-[#3a3a3a]'}`}>
      {s === 1 && (
        <svg viewBox="0 0 10 10" className="w-[9px] h-[9px]"><path d="m1.500 5 2.500 2.500 4.500-5" fill="none" stroke="#eee" strokeWidth="1.800" /></svg>
      )}
      {s === 2 && <span className="w-[9px] h-[9px] rounded-[2px] border border-[#3a3a3a]" />}
    </span>
  );
}

function Expander({ left }: { left: string }) {
  return (
    <span className={`absolute ${left} top-[4px] w-[12px] h-[12px] bg-white rounded-[2px] flex items-center justify-center`}>
      <span className="w-[6px] h-[2px] bg-[#333]" />
    </span>
  );
}

function DisplayRow({ r, i }: { r: Row; i: number }) {
  return (
    <div className="grid grid-cols-[134px_63px_64px] h-[21px] border-b border-[#4a4a4a] text-[#e6e6e6]">
      <div className="relative flex items-center border-r border-[#4a4a4a]">
        {i > 0 && <span className="absolute left-[8px] top-0 bottom-0 w-px bg-[#444]" />}
        {r.l === 2 && (
          <>
            <span className={`absolute left-[18px] top-0 w-px bg-[#444] ${r.last ? 'h-[11px]' : 'h-[21px]'}`} />
            <span className="absolute left-[18px] top-[10px] w-[17px] h-px bg-[#444]" />
          </>
        )}
        {r.l === 0 && <Expander left="left-[2px]" />}
        {r.l === 1 && <Expander left="left-[13px]" />}
        <span className={`pt-[2px] ${r.l === 0 ? 'pl-[21px]' : r.l === 1 ? 'pl-[31px]' : 'pl-[41px]'}`}>{r.t}</span>
      </div>
      <div className="flex items-center justify-center pr-[2px] border-r border-[#4a4a4a]">
        <Check s={r.s} />
      </div>
      <div className="flex items-center justify-center pr-[3px]">
        <Check s={0} dim={i >= 1 && i <= 4} />
      </div>
    </div>
  );
}

function DisplayPanel() {
  return (
    <div className="w-[283px] shrink-0 bg-[#5c5c5c] border-l border-[#3a3a3a] flex flex-col relative">
      <PanelStrip />
      <div className="h-[21px] bg-[#4f4f4f] border-b border-[#3a3a3a] flex items-center pl-[8px] font-bold text-[#eee] shrink-0">显示设置</div>
      <div className="h-[32px] flex items-end pl-[3px] shrink-0">
        <div className="w-[60px] h-[28px] rounded-t-[3px] bg-[#606060] border-x border-t border-[#444] flex items-center justify-center text-[#eee]">图元显示</div>
        <div className="w-[66px] h-[24px] flex items-center justify-center text-[#8c8c8c]">楼层显示</div>
      </div>
      <div className="ml-[2px] w-[277px] h-[736px] border border-[#3a3a3a] flex shrink-0 overflow-hidden">
        <div className="w-[261px] shrink-0">
          <div className="grid grid-cols-[134px_63px_64px] h-[21px] bg-[#686868] text-[#e6e6e6]">
            <div className="flex items-center justify-center border-r border-[#505050]">图层构件</div>
            <div className="flex items-center justify-center border-r border-[#505050]">显示图元</div>
            <div className="flex items-center justify-center">显示名称</div>
          </div>
          {rows.map((r, i) => (
            <DisplayRow key={i} r={r} i={i} />
          ))}
        </div>
        <div className="flex-1 bg-[#565656] flex flex-col items-center pt-[3px]">
          <span className="w-0 h-0 border-x-[5px] border-x-transparent border-b-[5px] border-b-[#333]" />
          <span className="w-[8px] h-[218px] rounded-full bg-[#484848] mt-[3px]" />
          <span className="mt-auto mb-[3px] w-0 h-0 border-x-[5px] border-x-transparent border-t-[5px] border-t-[#333]" />
        </div>
      </div>
      <div className="flex justify-end pt-[7px] pr-[8px]">
        <div className="w-[91px] h-[26px] bg-[#5f5f5f] border border-[#444] flex items-center justify-center text-[#e6e6e6]">恢复默认设置</div>
      </div>
      <div className="absolute left-[217px] top-[185px] w-[44px] text-[44px] leading-[44px] [writing-mode:vertical-rl] [text-orientation:upright] [word-spacing:-32px] whitespace-nowrap bg-[linear-gradient(180deg,#f3e8b0_0%,#eadb9c_14%,#4aa0e0_20%,#4a9fe0_42%,#2c6fc4_47%,#2f7fd2_62%,#4a9ee6_84%,#b4def6_100%)] bg-clip-text text-transparent drop-shadow-[0_0_3px_#000]">
        微笑的说 你是我的人
      </div>
      <div className="absolute left-[-6px] top-[776px] pointer-events-none text-[#ffffff4d] whitespace-nowrap font-['Liberation_Sans','Noto_Sans_CJK_SC',sans-serif]">
        <div className="text-[21px] leading-[26px]">激活 Windows</div>
        <div className="text-[15px] leading-[22px]">转到“设置”以激活 Windows。</div>
      </div>
    </div>
  );
}

function StatusBar() {
  return (
    <div className="h-[29px] bg-[#3c3c3c] flex items-center shrink-0">
      <div className="w-[160px] h-[27px] mt-[2px] bg-[#3a6ca8] flex items-center pl-[6px] text-[#f0f0f0] shrink-0">
        <span>定义</span>
        <svg viewBox="0 0 10 12" className="w-[8px] h-[10px] ml-[56px]"><path d="M3 0.500h6v7H3zM1 4h5v7H1z" fill="none" stroke="#fff" /></svg>
        <span className="w-[9px] h-[8px] border border-white border-t-2 ml-[19px]" />
        <X className="w-[10px] h-[10px] ml-[19px]" strokeWidth={3} />
      </div>
      <div className="w-[527px] flex items-center text-[#e6e6e6] shrink-0">
        <span className="ml-[105px] w-[41px]">层高:</span>
        <span className="w-[42px]">5</span>
        <span className="w-[40px]">标高:</span>
        <span className="w-[94px]">31~36</span>
        <span className="w-[103px]">0</span>
        <span className="w-[37px]">隐藏:</span>
        <span>0</span>
      </div>
      <div className="flex items-center gap-[3px] shrink-0">
        <div className="w-[25px] h-[24px] bg-[#444] border border-[#505050] flex items-center justify-center">
          <svg viewBox="0 0 14 14" className="w-[12px] h-[12px]"><path d="M2 1v11h11M2 8h4v4" fill="none" stroke="#ddd" /></svg>
        </div>
        <div className="w-[37px] h-[24px] bg-[#1a3f66] border border-[#2f6fb0] flex items-center justify-center gap-[5px]">
          <svg viewBox="0 0 14 16" className="w-[14px] h-[16px]"><rect x="1" y="2" width="11" height="13" fill="none" stroke="#5aa0e8" /><rect x="0" y="0" width="4" height="5" fill={O} /></svg>
          <Caret />
        </div>
        <div className="w-[25px] h-[24px] bg-[#444] flex items-center justify-center">
          <svg viewBox="0 0 14 14" className="w-[14px] h-[14px]"><path d="m1 1 12 12M13 1 1 13" stroke="#ddd" /></svg>
        </div>
        <div className="w-[33px] h-[24px] bg-[#444] flex items-center justify-center gap-[4px]">
          <svg viewBox="0 0 14 14" className="w-[13px] h-[13px]"><path d="M1 13h12M1 13l9-11" stroke="#ddd" fill="none" /></svg>
          <Caret />
        </div>
        <div className="w-[40px] h-[24px] bg-[#444] flex items-center justify-center gap-[4px]">
          <svg viewBox="0 0 14 14" className="w-[14px] h-[14px]"><path d="M3 1v6M0 4h6" stroke="#ddd" /><rect x="5" y="9" width="8" height="4" fill="#aaa" /></svg>
          <Caret />
        </div>
        <div className="w-[72px] h-[24px] bg-[#444] flex items-center justify-center text-[#eee] ml-[2px]">跨图层选择</div>
        <div className="w-[60px] h-[24px] bg-[#444] flex items-center justify-center text-[#eee]">折线选择</div>
      </div>
      <span className="ml-[6px] text-[#eee] whitespace-nowrap">按鼠标左键选择需要设置长度标注的第一点，按右键中止或 ESC 取消</span>
      <span className="ml-auto mr-[36px] text-[#eee]">500 FPS</span>
    </div>
  );
}

function Splitter({ w, top }: { w: string; top: string }) {
  return (
    <div className={`${w} shrink-0 relative ${top}`}>
      <span className="absolute left-[1px] top-[420px] w-0 h-0 border-y-[4px] border-y-transparent border-r-[3px] border-r-[#222]" />
    </div>
  );
}

export default function App() {
  return (
    <div className="w-[1920px] h-[1048px] overflow-hidden flex flex-col bg-[#3c3c3c] text-[12px] leading-none font-['Noto_Sans_CJK_SC','Liberation_Sans',sans-serif]">
      <Header />
      <Ribbon />
      <OptionBar />
      <div className="h-[841px] flex shrink-0 relative">
        <NavPanel />
        <div className="w-[2px]" />
        <ListPanel />
        <Splitter w="w-[4px]" top="bg-[#484848]" />
        <Canvas />
        <Splitter w="w-[5px]" top="bg-[#4e4e4e]" />
        <DisplayPanel />
      </div>
      <StatusBar />
      <div className="flex-1 border-t border-white bg-[#0e1a28] relative overflow-hidden">
        <div className="w-[48px] h-full ml-[295px] bg-[#3a3f48]" />
        <span className="absolute left-[1885px] top-[3px] text-white">16:06</span>
      </div>
    </div>
  );
}
